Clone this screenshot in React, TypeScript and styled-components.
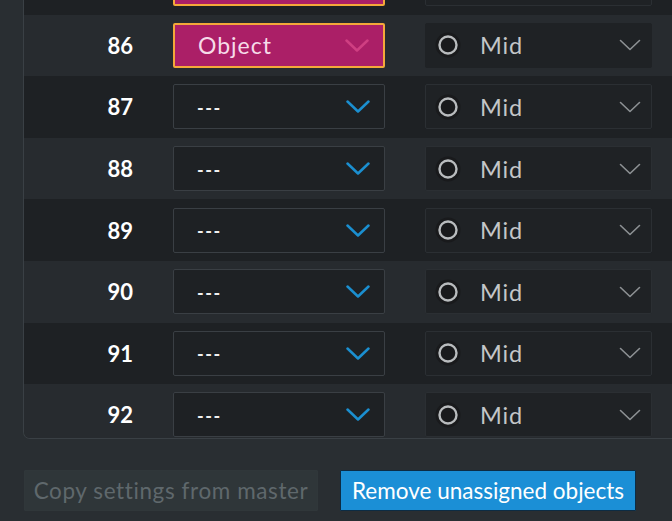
import React from "react";
import styled, { createGlobalStyle } from "styled-components";

const Global = createGlobalStyle`
  html, body { margin: 0; padding: 0; background: #292e32; overflow: hidden; }
  body { font-family: Lato, "Open Sans", sans-serif; }
`;

const Page = styled.div`
  width: 672px;
  height: 521px;
  padding-left: 23px;
  box-sizing: border-box;
  overflow: hidden;
`;

const Panel = styled.div`
  width: 700px;
  height: 439px;
  box-sizing: border-box;
  border: 1px solid #3a4045;
  border-top: none;
  border-radius: 0 0 7px 7px;
  overflow: hidden;
  background: #262a2e;
`;

const List = styled.div`
  margin-top: -47px;
  display: flex;
  flex-direction: column;
`;

const Row = styled.div<{ $dark: boolean }>`
  height: 61.6px;
  box-sizing: border-box;
  display: grid;
  grid-template-columns: 109px 212px 227px;
  column-gap: 40px;
  align-items: center;
  background: ${(p) => (p.$dark ? "#1e2124" : "#272b2f")};
`;

const Num = styled.div`
  text-align: right;
  color: #ffffff;
  font-weight: 700;
  font-size: 22px;
`;

const Select = styled.div<{ $active: boolean }>`
  height: 45px;
  box-sizing: border-box;
  display: flex;
  align-items: center;
  justify-content: space-between;
  padding: 0 14px 0 23px;
  border-radius: 2px;
  border: ${(p) => (p.$active ? "2px solid #f4a83a" : "1.5px solid #3a3f44")};
  background: ${(p) => (p.$active ? "#ab1f67" : "#1e2124")};
  color: ${(p) => (p.$active ? "#f6dbe9" : "#f0f0f0")};
  font-size: 23px;
  letter-spacing: ${(p) => (p.$active ? "1px" : "0")};
`;

const Dashes = styled.span`
  font-weight: 700;
  font-size: 18px;
  letter-spacing: 1.5px;
  padding-top: 2px;
`;

const Mode = styled.div<{ $flat: boolean }>`
  height: 45px;
  box-sizing: border-box;
  display: flex;
  align-items: center;
  padding: 0 10px 0 9px;
  border-radius: 2px;
  border: 1.5px solid ${(p) => (p.$flat ? "#1f2225" : "#2b2f33")};
  background: #1f2225;
  color: #c4c6c8;
  font-size: 23.5px;
`;

const ModeLabel = styled.span`
  flex: 1;
  margin-left: 19px;
  letter-spacing: 0.8px;
`;

const Footer = styled.div`
  display: flex;
  gap: 22px;
  padding-top: 31px;
  padding-left: 1px;
`;

const Button = styled.button<{ $primary?: boolean }>`
  height: 41px;
  box-sizing: border-box;
  font-family: Lato, "Open Sans", sans-serif;
  font-size: 22.5px;
  padding: 0;
  border-radius: 1px;
  border: 1px solid ${(p) => (p.$primary ? "#0c2c44" : "#30373a")};
  background: ${(p) => (p.$primary ? "#1b8fd6" : "#2f3639")};
  color: ${(p) => (p.$primary ? "#ffffff" : "#5f686c")};
  letter-spacing: ${(p) => (p.$primary ? "0" : "0.6px")};
  width: ${(p) => (p.$primary ? "296px" : "294px")};
  white-space: nowrap;
`;

const Chevron = ({ color, w = 24, h = 13, sw = 2.5 }: { color: string; w?: number; h?: number; sw?: number }) => (
  <svg width={w} height={h} viewBox={`0 0 ${w} ${h}`}>
    <polyline points={`1.5,1.5 ${w / 2},${h - 1.5} ${w - 1.5},1.5`} fill="none" stroke={color} strokeWidth={sw} strokeLinecap="round" strokeLinejoin="round" />
  </svg>
);

const Ring = () => (
  <svg width="26" height="26" viewBox="0 0 26 26">
    <circle cx="13" cy="13" r="12.5" fill="#191a1c" />
    <circle cx="13" cy="13" r="8.5" fill="none" stroke="#b9bcbe" strokeWidth="2.4" />
  </svg>
);

const rows = [
  { n: 85, obj: true },
  { n: 86, obj: true },
  { n: 87, obj: false },
  { n: 88, obj: false },
  { n: 89, obj: false },
  { n: 90, obj: false },
  { n: 91, obj: false },
  { n: 92, obj: false },
];

export default function App() {
  return (
    <Page>
      <Global />
      <Panel>
        <List>
          {rows.map((r) => (
            <Row key={r.n} $dark={r.n % 2 === 1}>
              <Num>{r.n}</Num>
              <Select $active={r.obj}>
                {r.obj ? <span>Object</span> : <Dashes>---</Dashes>}
                <Chevron color={r.obj ? "#cf3f82" : "#1b8fd0"} />
              </Select>
              <Mode $flat={r.n === 86}>
                <Ring />
                <ModeLabel>Mid</ModeLabel>
                <Chevron color="#8d9194" w={22} h={12} sw={1.6} />
              </Mode>
            </Row>
          ))}
        </List>
      </Panel>
      <Footer>
        <Button disabled>Copy settings from master</Button>
        <Button $primary>Remove unassigned objects</Button>
      </Footer>
    </Page>
  );
}
